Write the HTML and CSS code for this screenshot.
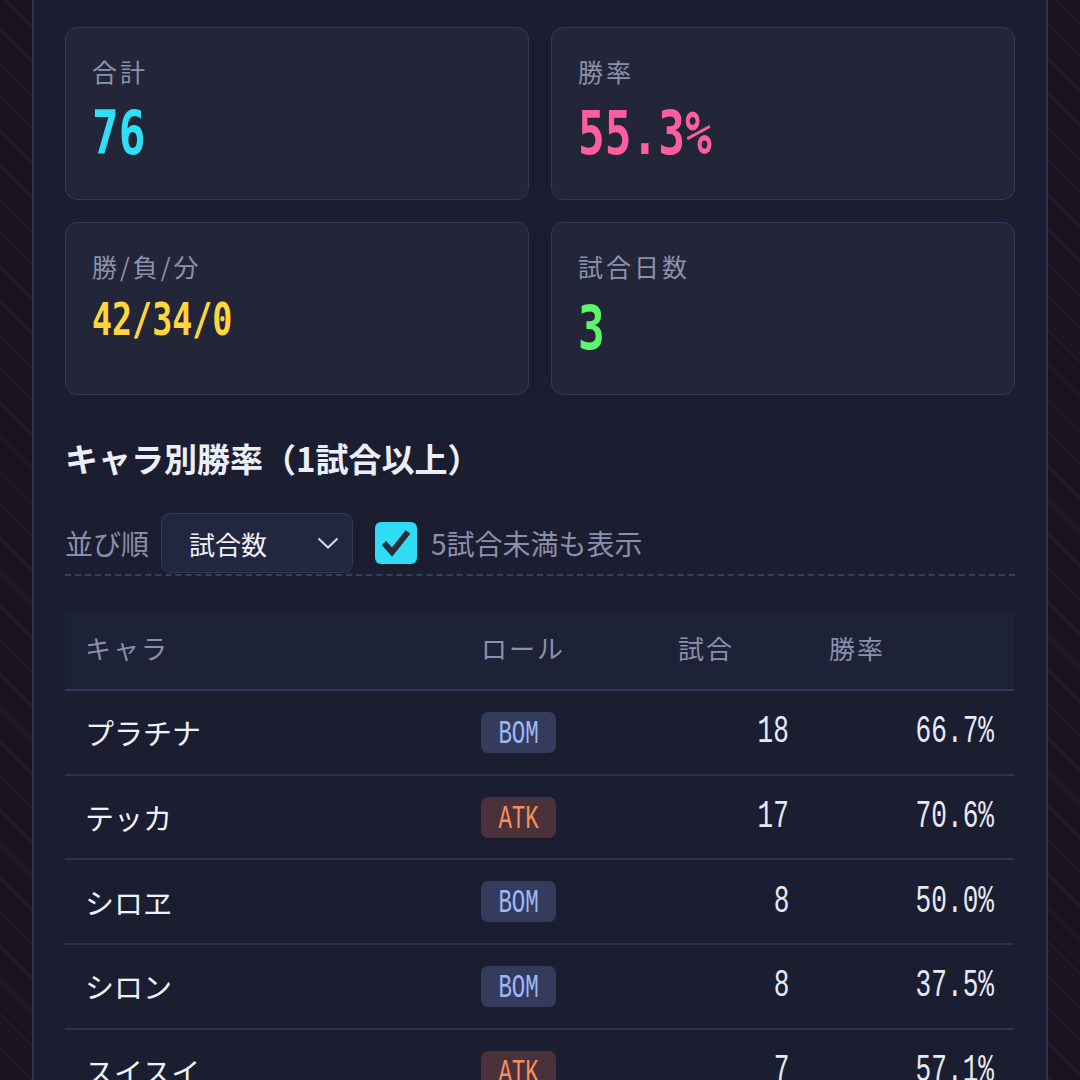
FILE: index.html
```html
<!DOCTYPE html>
<html lang="ja">
<head>
<meta charset="utf-8">
<title>戦績</title>
<link rel="stylesheet" href="styles.css">
</head>
<body>
<div class="panel">
  <div class="stats">
    <div class="card">
      <div class="label">合計</div>
      <div class="value cyan"><span class="squeeze">76</span></div>
    </div>
    <div class="card">
      <div class="label">勝率</div>
      <div class="value pink"><span class="squeeze">55.3%</span></div>
    </div>
    <div class="card">
      <div class="label">勝/負/分</div>
      <div class="value small yellow"><span class="squeeze">42/34/0</span></div>
    </div>
    <div class="card">
      <div class="label">試合日数</div>
      <div class="value green"><span class="squeeze">3</span></div>
    </div>
  </div>

  <h2 class="heading">キャラ別勝率（1試合以上）</h2>

  <div class="controls">
    <span class="ctl-label">並び順</span>
    <div class="select">
      <span class="select-text">試合数</span>
      <svg class="chevron" width="22" height="12" viewBox="0 0 22 12"><polyline points="1.5,1.5 11,10.5 20.5,1.5" fill="none" stroke="#d4d7e6" stroke-width="2"/></svg>
    </div>
    <div class="checkbox">
      <svg width="42" height="42" viewBox="0 0 42 42"><polyline points="9,21 17,30 33,10" fill="none" stroke="#2b2e3a" stroke-width="6"/></svg>
    </div>
    <span class="ctl-label">5試合未満も表示</span>
  </div>

  <table class="chars">
    <colgroup>
      <col class="c-name"><col class="c-role"><col class="c-games"><col class="c-rate">
    </colgroup>
    <thead>
      <tr><th>キャラ</th><th>ロール</th><th>試合</th><th>勝率</th></tr>
    </thead>
    <tbody>
      <tr><td class="name">プラチナ</td><td><span class="badge bom"><span class="bt">BOM</span></span></td><td class="num"><span class="nt">18</span></td><td class="num"><span class="nt">66.7%</span></td></tr>
      <tr><td class="name">テッカ</td><td><span class="badge atk"><span class="bt">ATK</span></span></td><td class="num"><span class="nt">17</span></td><td class="num"><span class="nt">70.6%</span></td></tr>
      <tr><td class="name">シロヱ</td><td><span class="badge bom"><span class="bt">BOM</span></span></td><td class="num"><span class="nt">8</span></td><td class="num"><span class="nt">50.0%</span></td></tr>
      <tr><td class="name">シロン</td><td><span class="badge bom"><span class="bt">BOM</span></span></td><td class="num"><span class="nt">8</span></td><td class="num"><span class="nt">37.5%</span></td></tr>
      <tr><td class="name">スイスイ</td><td><span class="badge atk"><span class="bt">ATK</span></span></td><td class="num"><span class="nt">7</span></td><td class="num"><span class="nt">57.1%</span></td></tr>
    </tbody>
  </table>
</div>
</body>
</html>
```
FILE: styles.css
```css
* { box-sizing: border-box; }
html, body { margin: 0; padding: 0; }
body {
  width: 1080px;
  height: 1080px;
  overflow: hidden;
  font-family: "Noto Sans CJK JP", "Noto Sans", sans-serif;
  background-color: #19141f;
  background-image: repeating-linear-gradient(45deg, #19141f 0px, #19141f 22px, #211a29 22px, #211a29 24px);
}
.panel {
  margin-left: 32px;
  width: 1016px;
  min-height: 1200px;
  background: #1b1e31;
  border-left: 2px solid #2c3052;
  border-right: 2px solid #2c3052;
  padding: 27px 31px 40px;
}
.stats {
  display: grid;
  grid-template-columns: 1fr 1fr;
  gap: 22px;
}
.card {
  background: #232638;
  border: 1.5px solid #33375a;
  border-radius: 12px;
  padding: 28px 26px 34px;
  min-height: 173px;
}
.label {
  font-size: 25px;
  line-height: 30px;
  letter-spacing: 3px;
  color: #8c91ae;
}
.value {
  margin-top: 17px;
  font-family: "DejaVu Sans Mono", monospace;
  font-weight: bold;
  font-size: 60px;
  line-height: 60px;
  white-space: nowrap;
}
.value.small {
  margin-top: 16px;
  font-size: 45px;
  line-height: 45px;
}
.squeeze {
  display: inline-block;
  transform: scaleX(0.74);
  transform-origin: left center;
}
.cyan { color: #2fdff8; }
.pink { color: #ff5e9e; }
.yellow { color: #ffd63c; }
.green { color: #5cf56c; }

.heading {
  margin: 41px 0 0;
  font-size: 33px;
  line-height: 44px;
  font-weight: bold;
  color: #eceef8;
}
.controls {
  margin-top: 33px;
  display: flex;
  align-items: center;
  padding-bottom: 1px;
  border-bottom: 2px dashed #383d5c;
}
.ctl-label {
  font-size: 28px;
  color: #8a8fac;
}
.select {
  margin-left: 12px;
  width: 192px;
  height: 60px;
  display: flex;
  align-items: center;
  justify-content: space-between;
  padding: 0 13px 0 27px;
  background: #222640;
  border: 1.5px solid #33385a;
  border-radius: 9px;
}
.select-text {
  font-size: 26px;
  color: #f0f2fa;
}
.checkbox {
  margin-left: 22px;
  margin-right: 14px;
  width: 42px;
  height: 42px;
  border-radius: 6px;
  background: #2fdcf6;
}
.checkbox svg { display: block; }

.chars {
  margin-top: 37px;
  width: 949px;
  border-collapse: collapse;
  table-layout: fixed;
}
.c-name { width: 396px; }
.c-role { width: 197px; }
.c-games { width: 151px; }
.c-rate { width: 205px; }
.chars th {
  height: 77px;
  padding: 0 20px 7px;
  text-align: left;
  font-weight: normal;
  font-size: 26px;
  letter-spacing: 2px;
  color: #8a8fac;
  background: #1e2236;
  border-bottom: 2px solid #31365a;
}
.chars td {
  height: 84.7px;
  padding: 0 20px;
  vertical-align: middle;
  border-bottom: 2px solid #2d3150;
}
.name {
  font-size: 29px;
  color: #f0f2fa;
}
.num {
  text-align: right;
  font-family: "Liberation Mono", monospace;
  font-size: 39px;
  color: #e6e8f3;
}
.nt {
  display: inline-block;
  transform: scaleX(0.67);
  transform-origin: right center;
}
.badge {
  display: inline-block;
  width: 75px;
  height: 41px;
  line-height: 41px;
  padding-top: 2px;
  border-radius: 7px;
  text-align: center;
  font-family: "Liberation Mono", monospace;
  font-size: 34px;
  vertical-align: middle;
}
.bt {
  display: inline-block;
  transform: scaleX(0.66);
}
.bom { background: #343b5c; color: #9cb9f5; }
.atk { background: #4b3139; color: #f4905e; }
```
